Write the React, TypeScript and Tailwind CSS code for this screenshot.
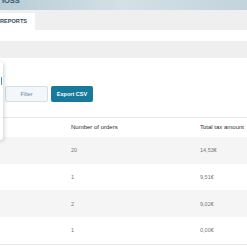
const rows = [
  { orders: '20', tax: '14,53€' },
  { orders: '1', tax: '9,51€' },
  { orders: '2', tax: '9,02€' },
  { orders: '1', tax: '0,00€' },
]

export default function App() {
  return (
    <div
      className="relative w-[247px] h-[247px] overflow-hidden bg-white"
      style={{ fontFamily: '"Liberation Sans", Arial, sans-serif' }}
    >
      {/* header banner */}
      <div className="relative h-[10px] overflow-hidden bg-gradient-to-r from-[#b9ccd6] via-[#d3e0e6] to-[#c3d3dc]">
        <div className="absolute left-[-16px] top-[-4px] text-[7.5px] font-bold leading-[9px] text-[#2f5a70] whitespace-nowrap">
          OSS IOSS
        </div>
      </div>

      {/* tabs */}
      <div className="flex h-[20px] items-end bg-[#efefef]">
        <div className="flex h-[17px] w-[35px] items-center bg-white">
          <span className="text-[5.6px] font-bold text-[#2d4b5c]">REPORTS</span>
        </div>
      </div>

      <div className="h-[11px]" />
      <div className="h-[17px] bg-[#efefef]" />
      <div className="h-[28px]" />

      {/* actions */}
      <div className="flex h-[16px] gap-[3px] pl-[5px]">
        <button className="w-[43px] rounded-[2px] border border-[#d3e0e8] bg-[#f4f7f9] text-[5.5px] text-[#6585a3]">
          Filter
        </button>
        <button className="w-[42px] rounded-[2px] bg-[#17799c] text-[5.5px] font-bold text-white">
          Export CSV
        </button>
      </div>

      <div className="h-[15px]" />

      {/* table */}
      <div className="border-t border-[#e6e6e6]">
        <div className="grid h-[19px] grid-cols-[71px_129px_1fr] items-center text-[6px] text-[#2e2e2e]">
          <span />
          <span>Number of orders</span>
          <span className="whitespace-nowrap">Total tax amount</span>
        </div>
        {rows.map((r, i) => (
          <div
            key={i}
            className={`grid h-[26.7px] grid-cols-[71px_129px_1fr] items-center text-[5.5px] text-[#777] ${
              i % 2 === 0 ? 'bg-[#f5f5f5]' : 'bg-white'
            }`}
          >
            <span />
            <span>{r.orders}</span>
            <span>{r.tax}</span>
          </div>
        ))}
        <div className="border-t border-[#e6e6e6]" />
      </div>

      {/* dropdown panel cut at left edge */}
      <div className="absolute left-[-60px] top-[62px] h-[78px] w-[63px] rounded-[3px] bg-white shadow-[1px_1px_4px_rgba(0,0,0,0.18)]">
        <div className="absolute right-[1px] top-[15px] h-[8px] w-[1.5px] bg-[#4a90d9]" />
      </div>
    </div>
  )
}
